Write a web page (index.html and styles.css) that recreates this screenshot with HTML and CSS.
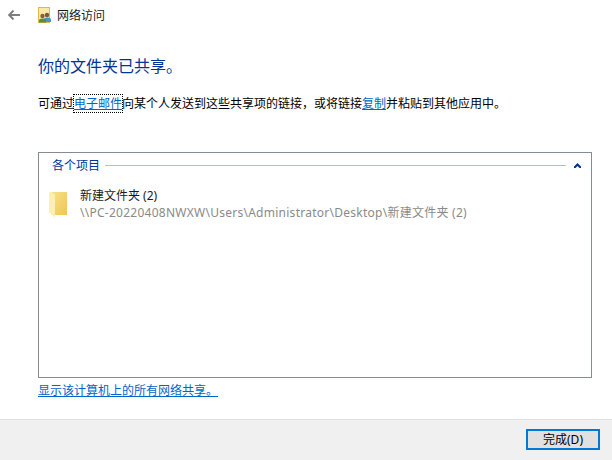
FILE: index.html
```html
<!DOCTYPE html>
<html lang="zh-CN">
<head>
<meta charset="utf-8">
<title>网络访问</title>
<link rel="stylesheet" href="styles.css">
</head>
<body>
<div class="window">
  <header class="titlebar">
    <svg class="back" width="12" height="10" viewBox="0 0 12 10"><path d="M5.5 0.5 L1.2 5 L5.5 9.5 M1.5 5 H12" fill="none" stroke="#7f7f7f" stroke-width="2"/></svg>
    <svg class="appicon" width="13" height="16" viewBox="0 0 13 16">
      <rect x="0.5" y="0.5" width="11" height="15" fill="#fbe9a5" stroke="#e3b93f"/>
      <circle cx="9" cy="8" r="2.2" fill="#7a5a3a"/>
      <path d="M6 15 V12.5 Q6 10.5 9 10.5 Q13 10.5 13 12.5 V15 Z" fill="#4a94c8"/>
      <circle cx="4.5" cy="9" r="2.2" fill="#8a5f3c"/>
      <path d="M1 15.5 V13.5 Q1 11.5 4.5 11.5 Q8 11.5 8 13.5 V15.5 Z" fill="#4f8f4a"/>
    </svg>
    <span class="title">网络访问</span>
  </header>
  <main class="content">
    <h1 class="heading">你的文件夹已共享。</h1>
    <p class="intro">可通过<a class="link focused" href="#">电子邮件</a>向某个人发送到这些共享项的链接，或将链接<a class="link" href="#">复制</a>并粘贴到其他应用中。</p>
    <section class="box">
      <div class="group">
        <span class="group-name">各个项目</span>
        <span class="group-line"></span>
        <svg class="chevron" width="7" height="5" viewBox="0 0 7 5"><path d="M3.5 0 L7 3.5 L7 5 L5.5 5 L3.5 3 L1.5 5 L0 5 L0 3.5 Z" fill="#003399"/></svg>
      </div>
      <div class="item">
        <svg class="folder" width="18" height="26" viewBox="0 0 18 26">
          <defs>
            <linearGradient id="back" x1="0" y1="0" x2="1" y2="1">
              <stop offset="0" stop-color="#f8e08a"/>
              <stop offset="1" stop-color="#eec652"/>
            </linearGradient>
          </defs>
          <path d="M3 0 H18 V23 H3 Z" fill="url(#back)"/>
          <path d="M0 0 H2 L6 2.5 V26 L1 21 H0 Z" fill="#fdeeb2"/>
        </svg>
        <div class="item-text">
          <div class="item-name">新建文件夹 (2)</div>
          <div class="item-path">\\PC-20220408NWXW\Users\Administrator\Desktop\新建文件夹 (2)</div>
        </div>
      </div>
    </section>
    <a class="link all" href="#">显示该计算机上的所有网络共享。</a>
  </main>
  <footer class="footer">
    <button class="done">完成(D)</button>
  </footer>
</div>
</body>
</html>
```
FILE: styles.css
```css
* { box-sizing: border-box; }
html, body { margin: 0; padding: 0; background: #fff; }
body {
  font-family: "Noto Sans", "Noto Sans CJK SC", sans-serif;
  font-size: 12px;
  color: #000;
}
.window { width: 612px; height: 460px; display: flex; flex-direction: column; overflow: hidden; }
.titlebar { height: 32px; display: flex; align-items: center; padding-left: 8px; flex: none; }
.back { margin: 0 18px 2px 0; }
.appicon { margin: 0 6px 2px 0; }
.title { font-size: 12px; color: #1a1a1a; line-height: 16px; }
.content { flex: 1; padding: 0 20px 0 38px; display: flex; flex-direction: column; align-items: flex-start; }
.heading { margin: 22px 0 0; font-size: 16px; font-weight: 400; color: #003399; line-height: 24px; }
.intro { margin: 17px 0 0; line-height: 18px; white-space: nowrap; }
.link { color: #0066cc; text-decoration: underline; }
.focused { outline: 1px dotted #000; outline-offset: 0; }
.box { margin-top: 39px; width: 554px; height: 226px; border: 1px solid #868a91; flex: none; }
.group { display: flex; align-items: center; height: 24px; padding: 0 10px 0 13px; }
.group-name { color: #003399; line-height: 16px; margin-top: 1px; }
.group-line { flex: 1; height: 1px; background: #b0bdd6; margin: 0 8px 0 5px; }
.item { display: flex; align-items: flex-start; margin-top: 10px; padding-left: 10px; }
.folder { margin: 5px 13px 0 0; flex: none; }
.item-text { line-height: 17px; }
.item-name { color: #1a1a1a; }
.item-path { color: #8a8a8a; white-space: nowrap; letter-spacing: 0.26px; }
.all { margin-top: 4px; line-height: 17px; }
.footer { flex: none; height: 41px; background: #f0f0f0; border-top: 1px solid #dfdfdf; display: flex; justify-content: flex-end; align-items: flex-start; padding: 9px 12px 0 0; }
.done { width: 74px; height: 21px; padding: 0; border: 2px solid #0078d7; background: #e1e1e1; font: inherit; color: #000; line-height: 16px; }
```
